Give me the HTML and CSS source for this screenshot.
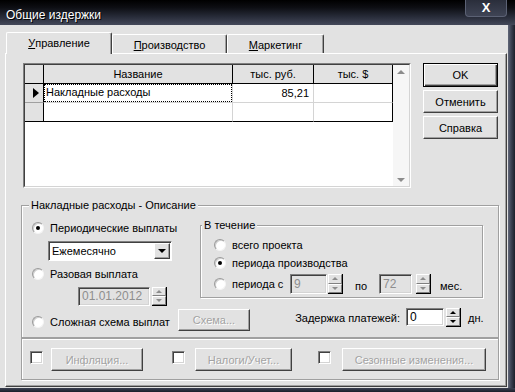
FILE: index.html
```html
<!DOCTYPE html>
<html lang="ru">
<head>
    <meta charset="UTF-8">
    <title>Общие издержки</title>
    <link rel="stylesheet" href="styles.css">
</head>
<body>
<div class="window">
    <div class="titlebar">
        <span class="title">Общие издержки</span>
        <span class="close">X</span>
    </div>
    <div class="middle">
        <div class="client">
            <div class="tabs">
                <div class="tab active" style="width:106px"><u>У</u>правление</div>
                <div class="tab" style="width:115px"><u>П</u>роизводство</div>
                <div class="tab" style="width:97px"><u>М</u>аркетинг</div>
            </div>
            <div class="panel">
                <div class="top">
                    <div class="grid-wrap">
                        <div class="grid-inner">
                            <div class="dbgrid">
                                <div class="cell hdr ind"></div>
                                <div class="cell hdr">Название</div>
                                <div class="cell hdr">тыс. руб.</div>
                                <div class="cell hdr last">тыс. $</div>

                                <div class="cell ind"><span class="pointer"></span></div>
                                <div class="cell txt"><span class="focus">Накладные расходы</span></div>
                                <div class="cell num">85,21</div>
                                <div class="cell last"></div>

                                <div class="cell ind bottom"></div>
                                <div class="cell bottom"></div>
                                <div class="cell bottom"></div>
                                <div class="cell last bottom"></div>
                            </div>
                            <div class="vscroll">
                                <span class="arr-up"></span>
                                <span class="arr-down"></span>
                            </div>
                        </div>
                    </div>
                    <div class="side-buttons">
                        <div class="btn default">OK</div>
                        <div class="btn">Отменить</div>
                        <div class="btn">Справка</div>
                    </div>
                </div>

                <div class="group main-group">
                    <span class="legend">Накладные расходы - Описание</span>
                    <div class="row-a">
                        <div class="left-col">
                            <div class="opt"><span class="radio checked"></span>Периодические выплаты</div>
                            <div class="combo">
                                <span class="combo-text">Ежемесячно</span>
                                <span class="dd"><span class="arr-down black"></span></span>
                            </div>
                            <div class="opt"><span class="radio"></span>Разовая выплата</div>
                            <div class="date-row">
                                <span class="field disabled date">01.01.2012</span>
                                <span class="spin"><span><i class="arr-up"></i></span><span><i class="arr-down"></i></span></span>
                            </div>
                        </div>
                        <div class="group period">
                            <span class="legend small">В течение</span>
                            <div class="popt"><span class="radio"></span>всего проекта</div>
                            <div class="popt"><span class="radio checked"></span>периода производства</div>
                            <div class="popt range">
                                <span class="radio"></span>
                                <span class="range-label">периода с</span>
                                <span class="field disabled from">9</span>
                                <span class="spin tall"><span><i class="arr-up"></i></span><span><i class="arr-down"></i></span></span>
                                <span class="po">по</span>
                                <span class="field disabled to">72</span>
                                <span class="spin tall gap"><span><i class="arr-up"></i></span><span><i class="arr-down"></i></span></span>
                                <span class="mes">мес.</span>
                            </div>
                        </div>
                    </div>
                    <div class="row-b">
                        <div class="opt complex"><span class="radio"></span>Сложная схема выплат</div>
                        <div class="btn disabled scheme">Схема...</div>
                        <span class="delay-label">Задержка платежей:</span>
                        <span class="field delay">0</span>
                        <span class="spin enabled"><span><i class="arr-up black"></i></span><span><i class="arr-down black"></i></span></span>
                        <span class="days">дн.</span>
                    </div>
                </div>

                <div class="group extras">
                    <span class="check"></span>
                    <div class="btn disabled" style="width:92px">Инфляция...</div>
                    <span class="check wide"></span>
                    <div class="btn disabled" style="width:97px">Налоги/Учет...</div>
                    <span class="check mid"></span>
                    <div class="btn disabled seasonal" style="width:144px">Сезонные изменения...</div>
                </div>
            </div>
        </div>
        <div class="right-frame"></div>
    </div>
    <div class="bottom-frame"></div>
</div>
</body>
</html>
```

FILE: styles.css
```css
body {
    margin: 0;
    background-color: #1d2030;
    font-family: "Liberation Sans", Arial, sans-serif;
    font-size: 11px;
    color: #000;
}
.window {
    width: 515px;
    height: 392px;
    display: flex;
    flex-direction: column;
}
.titlebar {
    height: 25px;
    display: flex;
    justify-content: space-between;
    align-items: flex-start;
    background: linear-gradient(to bottom, #000 0%, #0d0e13 30%, #262a37 65%, #434859 100%);
}
.title {
    color: #fff;
    font-size: 12px;
    padding: 8px 0 0 6px;
    text-shadow: 1px 1px 0 #000;
}
.close {
    width: 42px;
    height: 17px;
    margin-right: 8px;
    box-sizing: border-box;
    border: 1px solid #5b6174;
    border-top: none;
    border-radius: 0 0 4px 4px;
    background: linear-gradient(to bottom, #2a2e3b, #3f4455);
    color: #fff;
    font-weight: bold;
    font-size: 13px;
    line-height: 16px;
    text-align: center;
}
.middle {
    display: flex;
    height: 363px;
}
.client {
    width: 508px;
    height: 363px;
    box-sizing: border-box;
    padding-top: 7px;
    background-color: #e2e2e2;
}
.right-frame {
    flex: 1;
    background: linear-gradient(to right, #606678, #3c4152 45%, #1b1e29);
}
.bottom-frame {
    height: 4px;
    background: linear-gradient(to bottom, #3c4152, #1b1e29);
}

/* tabs */
.tabs {
    display: flex;
    align-items: flex-end;
    height: 21px;
    padding-left: 6px;
}
.tab {
    box-sizing: border-box;
    height: 19px;
    border: 1px solid;
    border-color: #fff #404040 transparent #fff;
    border-bottom: none;
    border-radius: 2px 2px 0 0;
    box-shadow: inset -1px 0 0 #a0a0a0;
    display: flex;
    align-items: center;
    justify-content: center;
    padding-top: 1px;
}
.tab.active {
    position: relative;
    height: 22px;
    margin-bottom: -1px;
    background-color: #e2e2e2;
    padding-top: 0;
    padding-bottom: 2px;
}
.panel {
    box-sizing: border-box;
    width: 502px;
    height: 334px;
    margin-left: 5px;
    padding: 9px 0 0 15px;
    border: 1px solid;
    border-color: #fff #404040 #404040 #fff;
    box-shadow: inset -1px -1px 0 #a0a0a0;
}

/* grid */
.top {
    display: flex;
    align-items: flex-start;
    margin-left: 2px;
}
.grid-wrap {
    width: 388px;
    height: 125px;
    box-sizing: border-box;
    border: 1px solid;
    border-color: #808080 #fff #fff #808080;
}
.grid-inner {
    height: 100%;
    box-sizing: border-box;
    border: 1px solid;
    border-color: #404040 #d4d4d4 #d4d4d4 #404040;
    background-color: #fff;
    display: flex;
    align-items: flex-start;
}
.dbgrid {
    display: grid;
    grid-template-columns: 19px 189px 81px 79px;
    grid-template-rows: 19px 19px 19px;
}
.cell {
    box-sizing: border-box;
    border-right: 1px solid #d4d4d4;
    border-bottom: 1px solid #d4d4d4;
    line-height: 18px;
    white-space: nowrap;
}
.cell.hdr {
    background-color: #e2e2e2;
    border-right-color: #000;
    border-bottom-color: #000;
    text-align: center;
}
.cell.ind {
    background-color: #e2e2e2;
    border-right-color: #000;
    border-bottom-color: #a0a0a0;
    display: flex;
    align-items: center;
    padding-left: 8px;
}
.cell.hdr.ind {
    border-bottom-color: #000;
}
.cell.last {
    border-right-color: #000;
}
.cell.bottom {
    border-bottom-color: #000;
}
.pointer {
    width: 0;
    height: 0;
    border-left: 6px solid #000;
    border-top: 5px solid transparent;
    border-bottom: 5px solid transparent;
}
.cell.txt {
    padding: 0;
}
.focus {
    display: block;
    height: 18px;
    box-sizing: border-box;
    padding-left: 2px;
    outline: 1px dotted #000;
    outline-offset: -1px;
    line-height: 17px;
}
.cell.num {
    text-align: right;
    padding-right: 4px;
}
.vscroll {
    width: 17px;
    height: 100%;
    background-color: #f6f6f6;
    display: flex;
    flex-direction: column;
    justify-content: space-between;
    align-items: center;
    box-sizing: border-box;
    padding: 5px 0 4px;
}
.arr-up, .arr-down {
    display: block;
    width: 0;
    height: 0;
    border-left: 3px solid transparent;
    border-right: 3px solid transparent;
}
.arr-up {
    border-bottom: 3px solid #8c8c8c;
}
.arr-down {
    border-top: 3px solid #8c8c8c;
}
.arr-up.black {
    border-bottom-color: #000;
}
.arr-down.black {
    border-top-color: #000;
}
.vscroll .arr-up, .vscroll .arr-down {
    border-left-width: 4px;
    border-right-width: 4px;
    border-bottom-width: 4px;
    border-top-width: 4px;
}
.vscroll .arr-up {
    border-top: none;
}
.vscroll .arr-down {
    border-bottom: none;
}

/* buttons */
.side-buttons {
    display: flex;
    flex-direction: column;
    gap: 3px;
    margin-left: 12px;
}
.btn {
    box-sizing: border-box;
    width: 75px;
    height: 23px;
    border: 1px solid;
    border-color: #fff #404040 #404040 #fff;
    box-shadow: inset -1px -1px 0 #a0a0a0;
    display: flex;
    align-items: center;
    justify-content: center;
    background-color: #e2e2e2;
}
.btn.default {
    height: 24px;
    border-color: #000;
    box-shadow: inset 1px 1px 0 #fff, inset -1px -1px 0 #404040, inset -2px -2px 0 #a0a0a0;
}
.btn.disabled {
    color: #a3a3a3;
    text-shadow: 1px 1px 0 #fff;
}

/* group boxes */
.group {
    box-sizing: border-box;
    border: 1px solid #a0a0a0;
    box-shadow: 1px 1px 0 #fff, inset 1px 1px 0 #fff;
}
.legend {
    align-self: flex-start;
    margin: -7px 0 0 7px;
    padding: 0 2px;
    line-height: 13px;
    background-color: #e2e2e2;
}
.legend.small {
    margin-left: 1px;
}
.main-group {
    width: 478px;
    height: 133px;
    margin-top: 17px;
    display: flex;
    flex-direction: column;
}
.row-a {
    display: flex;
    align-items: flex-start;
    margin-top: 7px;
}
.left-col {
    width: 168px;
    margin-left: 10px;
    display: flex;
    flex-direction: column;
}
.opt, .popt {
    display: flex;
    align-items: center;
    height: 18px;
    gap: 6px;
    white-space: nowrap;
}
.radio {
    box-sizing: border-box;
    width: 12px;
    height: 12px;
    flex-shrink: 0;
    border-radius: 50%;
    background-color: #fff;
    border: 1px solid;
    border-color: #9a9a9a #f4f4f4 #f4f4f4 #9a9a9a;
    box-shadow: inset 1px 1px 0 #cfcfcf;
    display: flex;
    align-items: center;
    justify-content: center;
}
.radio.checked::after {
    content: "";
    width: 4px;
    height: 4px;
    border-radius: 50%;
    background-color: #000;
}
.combo {
    box-sizing: border-box;
    width: 124px;
    height: 20px;
    margin: 4px 0 4px 16px;
    padding: 1px;
    border: 1px solid;
    border-color: #808080 #fff #fff #808080;
    box-shadow: inset 1px 1px 0 #404040;
    background-color: #fff;
    display: flex;
    align-items: center;
}
.combo-text {
    flex: 1;
    padding-left: 2px;
}
.dd {
    box-sizing: border-box;
    width: 16px;
    height: 16px;
    border: 1px solid;
    border-color: #fff #404040 #404040 #fff;
    box-shadow: inset -1px -1px 0 #a0a0a0;
    background-color: #e2e2e2;
    display: flex;
    align-items: center;
    justify-content: center;
}
.dd .arr-down {
    border-left-width: 4px;
    border-right-width: 4px;
    border-top-width: 4px;
}
.field {
    box-sizing: border-box;
    height: 19px;
    padding-left: 3px;
    border: 1px solid;
    border-color: #808080 #fff #fff #808080;
    box-shadow: inset 1px 1px 0 #404040, inset -1px -1px 0 #d4d4d4;
    background-color: #fff;
    line-height: 17px;
    white-space: nowrap;
}
.field.disabled {
    background-color: #e2e2e2;
    color: #8e8e8e;
}
.date-row {
    display: flex;
    gap: 2px;
    margin: 4px 0 0 46px;
}
.field.date {
    width: 72px;
    font-size: 12px;
}
.spin {
    box-sizing: border-box;
    width: 15px;
    height: 19px;
    display: flex;
    flex-direction: column;
    border-right: 1px solid #000;
    border-bottom: 1px solid #000;
}
.spin > span {
    flex: 1;
    box-sizing: border-box;
    border: 1px solid;
    border-color: #fff #808080 #808080 #fff;
    background-color: #e2e2e2;
    display: flex;
    align-items: center;
    justify-content: center;
}
.spin.tall {
    height: 20px;
    margin-left: 1px;
}
.spin.gap {
    margin-left: 4px;
}

/* period box */
.period {
    width: 283px;
    height: 73px;
    margin-top: 6px;
    display: flex;
    flex-direction: column;
    padding-left: 13px;
}
.period .legend {
    margin-left: -12px;
    margin-bottom: 4px;
}
.popt.range {
    height: 20px;
    margin-top: 2px;
    gap: 0;
}
.popt.range .radio {
    margin-right: 6px;
}
.range-label {
    width: 58px;
}
.field.from {
    width: 37px;
    height: 20px;
    line-height: 18px;
    font-size: 12px;
}
.field.to {
    width: 33px;
    height: 20px;
    line-height: 18px;
    font-size: 12px;
}
.po {
    width: 24px;
    margin-left: 12px;
    padding-top: 3px;
}
.mes {
    margin-left: 9px;
    padding-top: 3px;
}

/* bottom of the group */
.row-b {
    display: flex;
    align-items: flex-start;
    margin-top: 2px;
}
.opt.complex {
    width: 146px;
    margin: 5px 0 0 10px;
}
.btn.scheme {
    width: 72px;
    height: 22px;
    margin-top: 1px;
}
.delay-label {
    width: 107px;
    margin-left: 43px;
    margin-top: 1px;
    line-height: 18px;
    text-align: right;
}
.field.delay {
    width: 38px;
    height: 18px;
    margin-left: 6px;
    line-height: 16px;
    font-size: 12px;
}
.spin.enabled {
    margin-left: 2px;
}
.days {
    margin-left: 7px;
    margin-top: 1px;
    line-height: 18px;
}

.extras {
    width: 478px;
    height: 42px;
    display: flex;
    align-items: flex-start;
    padding-top: 9px;
}
.check {
    box-sizing: border-box;
    width: 13px;
    height: 13px;
    margin: 3px 8px 0 8px;
    border: 1px solid;
    border-color: #808080 #fff #fff #808080;
    box-shadow: inset 1px 1px 0 #404040, inset -1px -1px 0 #d4d4d4;
    background-color: #fff;
}
.check.wide {
    margin-left: 29px;
    margin-right: 10px;
}
.check.mid {
    margin-left: 26px;
    margin-right: 11px;
}
```
